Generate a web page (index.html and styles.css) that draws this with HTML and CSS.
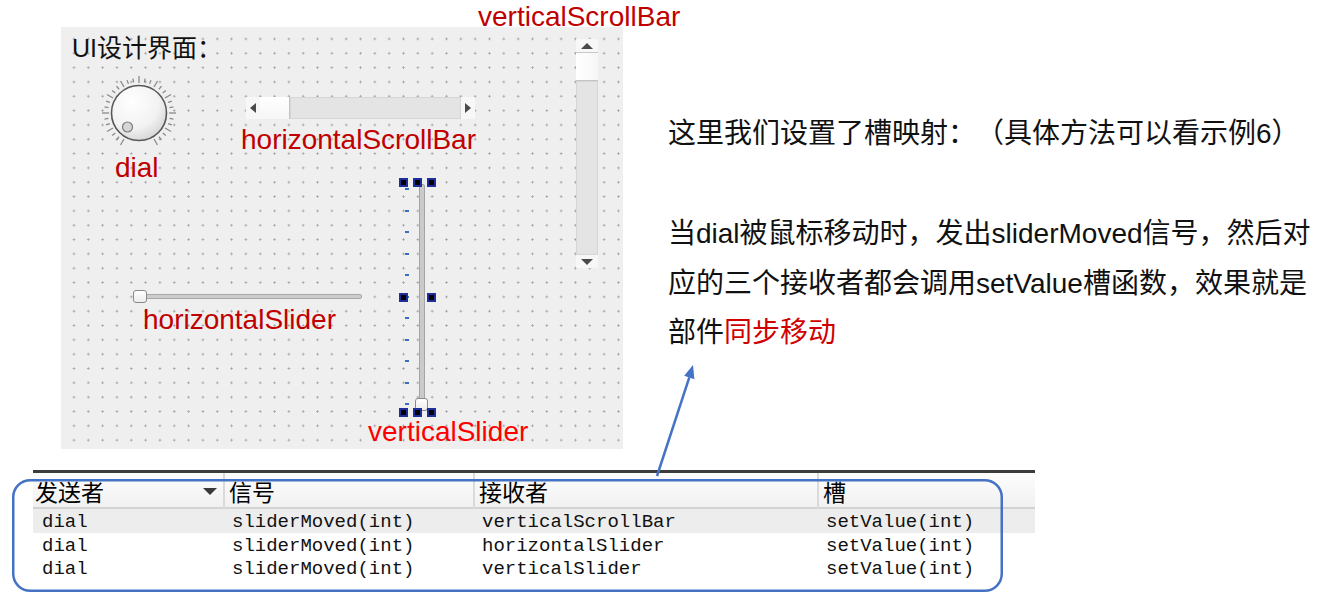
FILE: index.html
```html
<!DOCTYPE html>
<html lang="zh">
<head>
<meta charset="utf-8">
<title>信号与槽</title>
<link rel="stylesheet" href="styles.css">
</head>
<body>
<div class="slide">
  <div class="top">
    <div class="designer">
      <div class="ui-title">UI设计界面：</div>

      <svg class="dial" width="80" height="80" viewBox="0 0 80 80">
        <defs>
          <radialGradient id="kg" cx="0.38" cy="0.3" r="0.8">
            <stop offset="0" stop-color="#ffffff"/>
            <stop offset="0.6" stop-color="#f2f2f2"/>
            <stop offset="1" stop-color="#cfcfcf"/>
          </radialGradient>
        </defs>
        <g stroke="#8a8a8a" stroke-width="1.3">
          <line x1="40" y1="3" x2="40" y2="10" transform="rotate(-150 40 40)"/>
          <line x1="40" y1="5" x2="40" y2="9" transform="rotate(-140 40 40)"/>
          <line x1="40" y1="5" x2="40" y2="9" transform="rotate(-130 40 40)"/>
          <line x1="40" y1="3" x2="40" y2="10" transform="rotate(-120 40 40)"/>
          <line x1="40" y1="5" x2="40" y2="9" transform="rotate(-110 40 40)"/>
          <line x1="40" y1="5" x2="40" y2="9" transform="rotate(-100 40 40)"/>
          <line x1="40" y1="3" x2="40" y2="10" transform="rotate(-90 40 40)"/>
          <line x1="40" y1="5" x2="40" y2="9" transform="rotate(-80 40 40)"/>
          <line x1="40" y1="5" x2="40" y2="9" transform="rotate(-70 40 40)"/>
          <line x1="40" y1="3" x2="40" y2="10" transform="rotate(-60 40 40)"/>
          <line x1="40" y1="5" x2="40" y2="9" transform="rotate(-50 40 40)"/>
          <line x1="40" y1="5" x2="40" y2="9" transform="rotate(-40 40 40)"/>
          <line x1="40" y1="3" x2="40" y2="10" transform="rotate(-30 40 40)"/>
          <line x1="40" y1="5" x2="40" y2="9" transform="rotate(-20 40 40)"/>
          <line x1="40" y1="5" x2="40" y2="9" transform="rotate(-10 40 40)"/>
          <line x1="40" y1="3" x2="40" y2="10"/>
          <line x1="40" y1="5" x2="40" y2="9" transform="rotate(10 40 40)"/>
          <line x1="40" y1="5" x2="40" y2="9" transform="rotate(20 40 40)"/>
          <line x1="40" y1="3" x2="40" y2="10" transform="rotate(30 40 40)"/>
          <line x1="40" y1="5" x2="40" y2="9" transform="rotate(40 40 40)"/>
          <line x1="40" y1="5" x2="40" y2="9" transform="rotate(50 40 40)"/>
          <line x1="40" y1="3" x2="40" y2="10" transform="rotate(60 40 40)"/>
          <line x1="40" y1="5" x2="40" y2="9" transform="rotate(70 40 40)"/>
          <line x1="40" y1="5" x2="40" y2="9" transform="rotate(80 40 40)"/>
          <line x1="40" y1="3" x2="40" y2="10" transform="rotate(90 40 40)"/>
          <line x1="40" y1="5" x2="40" y2="9" transform="rotate(100 40 40)"/>
          <line x1="40" y1="5" x2="40" y2="9" transform="rotate(110 40 40)"/>
          <line x1="40" y1="3" x2="40" y2="10" transform="rotate(120 40 40)"/>
          <line x1="40" y1="5" x2="40" y2="9" transform="rotate(130 40 40)"/>
          <line x1="40" y1="5" x2="40" y2="9" transform="rotate(140 40 40)"/>
          <line x1="40" y1="3" x2="40" y2="10" transform="rotate(150 40 40)"/>
        </g>
        <circle cx="40" cy="40" r="27.5" fill="url(#kg)" stroke="#585858" stroke-width="1.6"/>
        <circle cx="28.5" cy="54" r="5" fill="#d6d6d6" stroke="#7c7c7c" stroke-width="1.2"/>
      </svg>
      <div class="label lbl-dial">dial</div>

      <div class="hscroll">
        <div class="sb-btn"><span class="tri-left"></span></div>
        <div class="sb-handle-h"></div>
        <div class="sb-track"></div>
        <div class="sb-btn"><span class="tri-right"></span></div>
      </div>
      <div class="label lbl-hscroll">horizontalScrollBar</div>

      <div class="vscroll">
        <div class="sb-btn-v"><span class="tri-up"></span></div>
        <div class="sb-handle-v"></div>
        <div class="sb-track"></div>
        <div class="sb-btn-v"><span class="tri-down"></span></div>
      </div>
      <div class="label lbl-vscroll">verticalScrollBar</div>

      <div class="hgroove"></div>
      <div class="hhandle"></div>
      <div class="label lbl-hslider">horizontalSlider</div>

      <div class="vgroove"></div>
      <div class="vticks">
        <span></span><span></span><span></span><span></span><span></span><span></span><span></span><span></span><span></span><span></span><span></span>
      </div>
      <div class="vhandle"></div>
      <span class="sel" style="left:338px;top:151px"></span>
      <span class="sel" style="left:352px;top:151px"></span>
      <span class="sel" style="left:366px;top:151px"></span>
      <span class="sel" style="left:338px;top:266px"></span>
      <span class="sel" style="left:366px;top:266px"></span>
      <span class="sel" style="left:338px;top:381px"></span>
      <span class="sel" style="left:352px;top:381px"></span>
      <span class="sel" style="left:366px;top:381px"></span>
      <div class="label lbl-vslider">verticalSlider</div>
    </div>

    <div class="notes">
      <p class="p1">这里我们设置了槽映射：（具体方法可以看示例6）</p>
      <p>当dial被鼠标移动时，发出sliderMoved信号，然后对<br>应的三个接收者都会调用setValue槽函数，效果就是<br>部件<span class="red">同步移动</span></p>
    </div>
  </div>

  <div class="conn-table">
    <div class="thead">
      <div class="th th-first"><span>发送者</span><span class="sort-tri"></span></div>
      <div class="th">信号</div>
      <div class="th">接收者</div>
      <div class="th">槽</div>
    </div>
    <div class="tr alt">
      <div class="td">dial</div>
      <div class="td">sliderMoved(int)</div>
      <div class="td">verticalScrollBar</div>
      <div class="td">setValue(int)</div>
    </div>
    <div class="tr">
      <div class="td">dial</div>
      <div class="td">sliderMoved(int)</div>
      <div class="td">horizontalSlider</div>
      <div class="td">setValue(int)</div>
    </div>
    <div class="tr">
      <div class="td">dial</div>
      <div class="td">sliderMoved(int)</div>
      <div class="td">verticalSlider</div>
      <div class="td">setValue(int)</div>
    </div>
  </div>

  <svg class="overlay" width="1318" height="600" viewBox="0 0 1318 600">
    <rect x="13.25" y="480.25" width="988.5" height="110.5" rx="17" ry="17" fill="none" stroke="#4472c4" stroke-width="2.5"/>
    <line x1="657" y1="476" x2="689.3" y2="377.4" stroke="#4472c4" stroke-width="2.5"/>
    <polygon points="693,365 694.4,379.2 684.2,375.8" fill="#4472c4"/>
  </svg>
</div>
</body>
</html>
```

FILE: styles.css
```css
html, body {
  margin: 0;
  padding: 0;
  background: #ffffff;
}

body {
  font-family: "Liberation Sans", "Noto Sans CJK SC", sans-serif;
  color: #000;
  text-spacing-trim: space-all;
}

.slide {
  position: relative;
  width: 1318px;
  height: 600px;
  overflow: hidden;
}

.top {
  display: flex;
  align-items: flex-start;
  height: 470px;
  padding: 27px 0 0 61px;
  box-sizing: border-box;
}

/* ---------- designer canvas ---------- */
.designer {
  position: relative;
  flex: none;
  width: 562px;
  height: 422px;
  background-color: #efefef;
  background-image: radial-gradient(circle, #9c9c9c 0.8px, rgba(160,160,160,0) 1.3px);
  background-size: 14.33px 14.33px;
  background-position: 5.8px 4.8px;
}

.ui-title {
  position: absolute;
  left: 11px;
  top: 6px;
  font-size: 25px;
  line-height: 30px;
  color: #111;
  white-space: nowrap;
}

.label {
  position: absolute;
  font-family: "Liberation Sans", sans-serif;
  font-size: 28px;
  line-height: 32px;
  color: #c00000;
  white-space: nowrap;
}

.lbl-dial { left: 54px; top: 125px; }
.lbl-hscroll { left: 180px; top: 97px; }
.lbl-vscroll { left: 417px; top: -26px; }
.lbl-hslider { left: 82px; top: 277px; }
.lbl-vslider { left: 307px; top: 389px; color: #ff0000; }

.dial {
  position: absolute;
  left: 38px;
  top: 46px;
}

/* scroll bars */
.hscroll {
  position: absolute;
  left: 185px;
  top: 70px;
  width: 229px;
  height: 22px;
  display: flex;
}

.vscroll {
  position: absolute;
  left: 515px;
  top: 12px;
  width: 22px;
  height: 229px;
  display: flex;
  flex-direction: column;
}

.sb-btn {
  flex: none;
  width: 14px;
  background: #f7f7f7;
  display: flex;
  align-items: center;
  justify-content: center;
}

.sb-btn-v {
  flex: none;
  height: 13px;
  background: #f7f7f7;
  display: flex;
  align-items: center;
  justify-content: center;
}

.sb-handle-h {
  flex: none;
  width: 29px;
  background: linear-gradient(#ffffff, #f6f6f6);
  border-right: 1px solid #c4c4c4;
}

.sb-handle-v {
  flex: none;
  height: 27px;
  background: linear-gradient(90deg, #ffffff, #f6f6f6);
  border-top: 1px solid #c8c8c8;
  border-bottom: 1px solid #c4c4c4;
}

.sb-track {
  flex: 1;
  background: #e4e4e4;
  border: 1px solid #d6d6d6;
}

.tri-left {
  width: 0;
  height: 0;
  border-style: solid;
  border-width: 5px 6px 5px 0;
  border-color: transparent #4a4a4a transparent transparent;
}

.tri-right {
  width: 0;
  height: 0;
  border-style: solid;
  border-width: 5px 0 5px 6px;
  border-color: transparent transparent transparent #4a4a4a;
}

.tri-up {
  width: 0;
  height: 0;
  border-style: solid;
  border-width: 0 6px 6px 6px;
  border-color: transparent transparent #4a4a4a transparent;
}

.tri-down {
  width: 0;
  height: 0;
  border-style: solid;
  border-width: 6px 6px 0 6px;
  border-color: #4a4a4a transparent transparent transparent;
}

/* horizontal slider */
.hgroove {
  position: absolute;
  left: 74px;
  top: 267px;
  width: 225px;
  height: 3px;
  background: #cdcdcd;
  border: 1px solid #a9a9a9;
  border-radius: 2px;
}

.hhandle {
  position: absolute;
  left: 72px;
  top: 263px;
  width: 12px;
  height: 11px;
  background: linear-gradient(#ffffff, #ececec);
  border: 1px solid #8a8a8a;
  border-radius: 3px;
}

/* vertical slider */
.vgroove {
  position: absolute;
  left: 358px;
  top: 157px;
  width: 4px;
  height: 218px;
  background: #cacaca;
  border: 1px solid #a5a5a5;
  border-radius: 2px;
}

.vticks {
  position: absolute;
  left: 344px;
  top: 161px;
  width: 4px;
  display: flex;
  flex-direction: column;
  gap: 19.5px;
}

.vticks span {
  display: block;
  width: 4px;
  height: 2px;
  background: #3a6fc0;
}

.vhandle {
  position: absolute;
  left: 354px;
  top: 371px;
  width: 11px;
  height: 11px;
  background: linear-gradient(#ffffff, #ececec);
  border: 1px solid #8a8a8a;
  border-radius: 3px;
}

.sel {
  position: absolute;
  width: 5px;
  height: 5px;
  background: #000;
  border: 2px solid #1f2f9a;
}

/* ---------- explanation text ---------- */
.notes {
  margin-left: 45px;
  padding-top: 82px;
  font-size: 28px;
  line-height: 49.5px;
  color: #111;
  white-space: nowrap;
}

.notes p {
  margin: 0;
}

.notes .p1 {
  margin-bottom: 50.5px;
}

.red {
  color: #d00000;
}

/* ---------- connection table ---------- */
.conn-table {
  margin-left: 33px;
  width: 1002px;
  border-top: 3px solid #3c3c3c;
}

.thead,
.tr {
  display: grid;
  grid-template-columns: 190px 250px 344px 218px;
}

.thead {
  height: 36px;
  box-sizing: border-box;
  background: linear-gradient(#fdfdfd, #f1f1f1);
  border-bottom: 2px solid #d3d3d3;
}

.th {
  font-family: "Noto Sans CJK SC", sans-serif;
  font-size: 23px;
  line-height: 36px;
  padding-left: 4px;
  border-left: 2px solid #dadada;
  color: #000;
  white-space: nowrap;
}

.th-first {
  display: flex;
  justify-content: space-between;
  align-items: center;
  padding-left: 2px;
  border-left: none;
}

.sort-tri {
  width: 0;
  height: 0;
  margin-right: 6px;
  border-style: solid;
  border-width: 7px 7px 0 7px;
  border-color: #3a3a3a transparent transparent transparent;
}

.tr {
  height: 23.5px;
}

.tr.alt {
  background: #ededed;
}

.td {
  font-family: "Liberation Mono", "DejaVu Sans Mono", monospace;
  font-size: 19px;
  line-height: 23.5px;
  padding-top: 2px;
  padding-left: 9px;
  color: #111;
  white-space: nowrap;
}

/* ---------- annotations ---------- */
.overlay {
  position: absolute;
  left: 0;
  top: 0;
  pointer-events: none;
}
```
